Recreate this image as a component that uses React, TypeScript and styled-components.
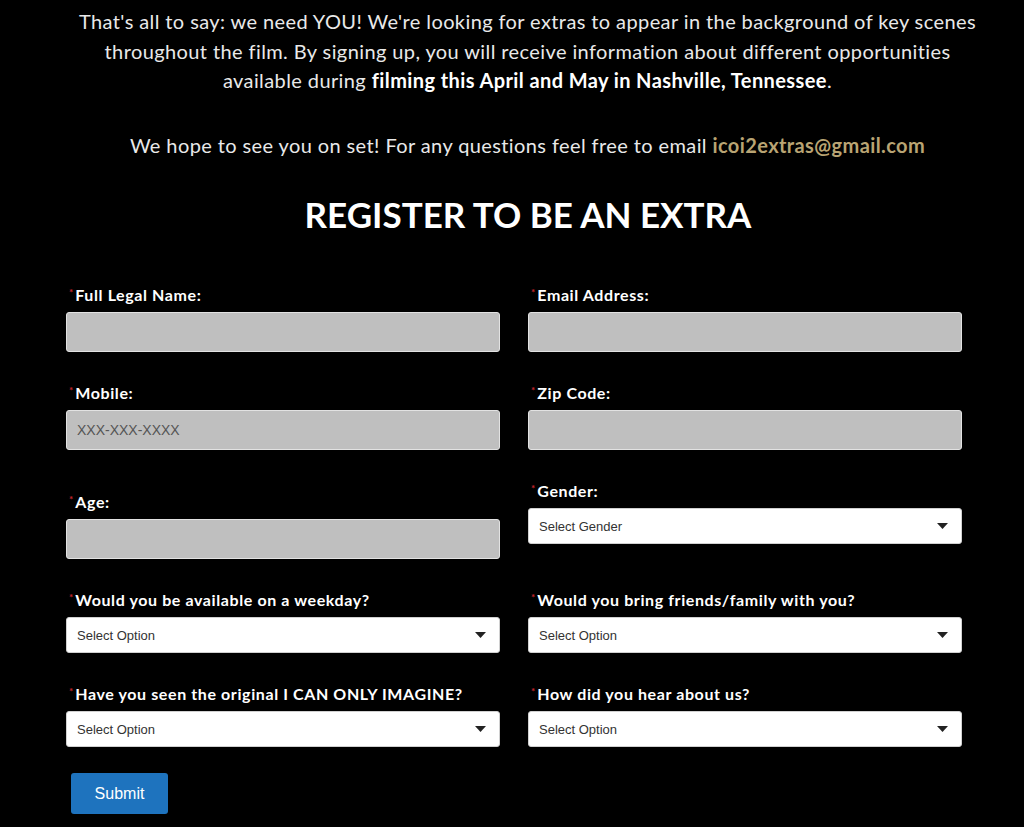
import React from "react";
import styled, { createGlobalStyle } from "styled-components";

const GlobalStyle = createGlobalStyle`
  html, body {
    margin: 0;
    padding: 0;
    background: #000;
  }
  body {
    font-family: Lato, "Open Sans", Arial, sans-serif;
  }
`;

const Page = styled.main`
  background: #000;
  min-height: 827px;
  padding: 7px 62px 20px 66px;
  box-sizing: border-box;
`;

const Intro = styled.section`
  margin: 0 -18px 0 9px;
  text-align: center;
  color: #e9e9e9;
  font-size: 20px;
  line-height: 29.5px;
  letter-spacing: 0.4px;
`;

const Para = styled.p`
  margin: 0 0 35px;
  strong {
    color: #fff;
    font-weight: 700;
  }
`;

const Mail = styled.a`
  color: #b9a473;
  font-weight: 700;
  text-decoration: none;
`;

const Title = styled.h2`
  margin: -3px 0 50px;
  padding-left: 28px;
  text-align: center;
  color: #fff;
  font-size: 35px;
  line-height: 44px;
  font-weight: 700;
`;

const Grid = styled.form`
  display: grid;
  grid-template-columns: 434px 434px;
  column-gap: 28px;
  row-gap: 32px;
`;

const Field = styled.div<{ $offset?: number }>`
  display: flex;
  flex-direction: column;
  margin-top: ${(p) => p.$offset ?? 0}px;
`;

const Label = styled.label`
  display: flex;
  align-items: flex-start;
  color: #fff;
  font-size: 16px;
  font-weight: 700;
  letter-spacing: 0.6px;
  line-height: 18px;
  margin-bottom: 8px;
`;

const Star = styled.span`
  color: #c0262d;
  font-size: 10px;
  line-height: 10px;
  letter-spacing: 0;
  margin: 1px 2px 0 3px;
`;

const TextInput = styled.input`
  height: 40px;
  box-sizing: border-box;
  background: #bfbfbf;
  border: 1px solid #e2e2e2;
  border-radius: 3px;
  padding: 0 10px;
  font-family: "Liberation Sans", Arial, sans-serif;
  font-size: 14px;
  color: #333;
  outline: none;
  &::placeholder {
    color: #555;
  }
`;

const SelectWrap = styled.div`
  position: relative;
  height: 36px;
`;

const Select = styled.select`
  width: 100%;
  height: 36px;
  box-sizing: border-box;
  appearance: none;
  background: #fff;
  border: 1px solid #d0d0d0;
  border-radius: 3px;
  padding: 0 10px;
  font-family: "Liberation Sans", Arial, sans-serif;
  font-size: 13px;
  color: #333;
  outline: none;
`;

const Caret = styled.svg`
  position: absolute;
  right: 14px;
  top: 15px;
  pointer-events: none;
`;

const Actions = styled.div`
  grid-column: 1 / -1;
  margin-top: -6px;
  padding-left: 5px;
`;

const SubmitButton = styled.button`
  width: 97px;
  height: 41px;
  background: #1e73be;
  color: #fff;
  border: none;
  border-radius: 3px;
  font-family: "Liberation Sans", Arial, sans-serif;
  font-size: 16px;
  cursor: pointer;
`;

const Req: React.FC<{ children: React.ReactNode }> = ({ children }) => (
  <Label>
    <Star>*</Star>
    {children}
  </Label>
);

const Dropdown: React.FC<{ placeholder: string }> = ({ placeholder }) => (
  <SelectWrap>
    <Select defaultValue="">
      <option value="">{placeholder}</option>
    </Select>
    <Caret width="11" height="6" viewBox="0 0 11 6">
      <path d="M0 0 H11 L5.5 6 Z" fill="#222" />
    </Caret>
  </SelectWrap>
);

export default function App() {
  return (
    <>
      <GlobalStyle />
      <Page>
        <Intro>
          <Para>
            That's all to say: we need YOU! We're looking for extras to appear
            in the background of key scenes throughout the film. By signing up,
            you will receive information about different opportunities
            available during{" "}
            <strong>filming this April and May in Nashville, Tennessee</strong>.
          </Para>
          <Para>
            We hope to see you on set! For any questions feel free to email{" "}
            <Mail href="#">icoi2extras@gmail.com</Mail>
          </Para>
        </Intro>
        <Title>REGISTER TO BE AN EXTRA</Title>
        <Grid onSubmit={(e) => e.preventDefault()}>
          <Field>
            <Req>Full Legal Name:</Req>
            <TextInput type="text" />
          </Field>
          <Field>
            <Req>Email Address:</Req>
            <TextInput type="email" />
          </Field>
          <Field>
            <Req>Mobile:</Req>
            <TextInput type="tel" placeholder="XXX-XXX-XXXX" />
          </Field>
          <Field>
            <Req>Zip Code:</Req>
            <TextInput type="text" />
          </Field>
          <Field $offset={11}>
            <Req>Age:</Req>
            <TextInput type="text" />
          </Field>
          <Field>
            <Req>Gender:</Req>
            <Dropdown placeholder="Select Gender" />
          </Field>
          <Field>
            <Req>Would you be available on a weekday?</Req>
            <Dropdown placeholder="Select Option" />
          </Field>
          <Field>
            <Req>Would you bring friends/family with you?</Req>
            <Dropdown placeholder="Select Option" />
          </Field>
          <Field>
            <Req>Have you seen the original I CAN ONLY IMAGINE?</Req>
            <Dropdown placeholder="Select Option" />
          </Field>
          <Field>
            <Req>How did you hear about us?</Req>
            <Dropdown placeholder="Select Option" />
          </Field>
          <Actions>
            <SubmitButton type="submit">Submit</SubmitButton>
          </Actions>
        </Grid>
      </Page>
    </>
  );
}
